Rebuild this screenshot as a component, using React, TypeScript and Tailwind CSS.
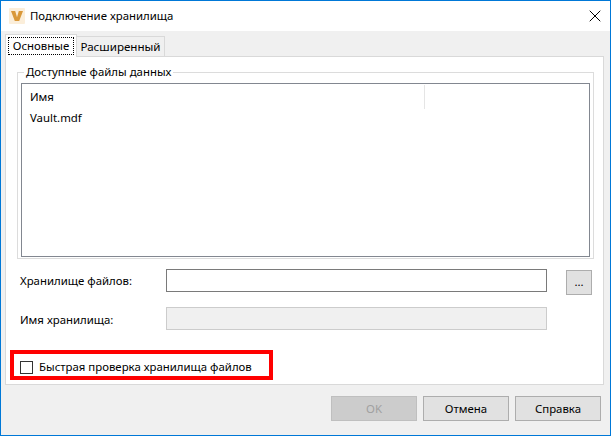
import { X } from 'lucide-react'

function DialogButton({ label, disabled }: { label: string; disabled?: boolean }) {
  return (
    <div
      className={
        'flex h-[25px] w-[86px] items-center justify-center border ' +
        (disabled ? 'border-[#bfbfbf] bg-[#cccccc] text-[#a0a0a0]' : 'border-[#adadad] bg-[#e1e1e1]')
      }
    >
      {label}
    </div>
  )
}

export default function App() {
  return (
    <div className="flex h-[436px] w-[611px] flex-col overflow-hidden border border-[#0078d7] bg-[#f0f0f0] font-['Noto_Sans','Open_Sans',sans-serif] text-[11.4px] leading-[16px] text-[#000000]">
      {/* Title bar */}
      <div className="flex h-[30px] shrink-0 items-center bg-white pl-[8px] pr-[5px]">
        <svg width="16" height="16" viewBox="0 0 16 16" className="shrink-0 blur-[0.4px]">
          <rect x="0" y="0" width="16" height="16" rx="1" fill="#fbeeda" />
          <path d="M2 3h4.2L8 9.2 9.8 3H14l-3.8 10H5.8z" fill="#d9983a" />
        </svg>
        <span className="ml-[5px] flex-1">Подключение хранилища</span>
        <X size={20} strokeWidth={1.2} className="text-black" />
      </div>

      <div className="flex flex-1 flex-col px-[4px] pt-[3px]">
        {/* Tabs */}
        <div className="relative z-10 flex h-[22px] items-end">
          <div className="relative h-[23px] w-[72px] translate-y-[1px] border border-b-0 border-[#d9d9d9] bg-white px-[2px] pt-[2px]">
            <div className="flex h-[18px] items-center justify-center border border-dotted border-black">Основные</div>
          </div>
          <div className="flex h-[20px] w-[88px] items-center justify-center border border-b-0 border-l-0 border-[#d9d9d9] text-[11.6px]">
            Расширенный
          </div>
        </div>

        {/* Panel */}
        <div className="relative flex h-[329px] w-[599px] flex-col border border-[#d9d9d9] bg-white pl-[11px]">
          <fieldset className="mt-[7px] h-[195px] w-[577px] border border-[#dcdcdc] px-[3px]">
            <legend className="ml-[3px] px-[2px] leading-[16px]">Доступные файлы данных</legend>
            <div className="mt-[3px] h-[174px] w-[569px] border border-[#828790] pt-[1px]">
              <div className="h-[24px] w-[403px] border-r border-[#e5e5e5] pl-[8px] pt-[4px]">Имя</div>
              <div className="mt-[1px] pl-[8px]">Vault.mdf</div>
            </div>
          </fieldset>

          <div className="mt-[10px] flex items-start">
            <div className="w-[149px] pl-[3px] pt-[4px]">Хранилище файлов:</div>
            <div className="h-[23px] w-[381px] border border-[#7a7a7a] bg-white" />
            <div className="ml-[19px] mt-[1px] flex h-[25px] w-[26px] items-center justify-center border border-[#adadad] bg-[#e1e1e1] pb-[2px]">
              ...
            </div>
          </div>
          <div className="mt-[12px] flex items-start">
            <div className="w-[149px] pl-[3px] pt-[5px]">Имя хранилища:</div>
            <div className="h-[23px] w-[381px] border border-[#cccccc] bg-[#f0f0f0]" />
          </div>

          <div className="mt-[29px] flex items-center pl-[3px]">
            <div className="h-[13px] w-[13px] border border-[#333333] bg-white" />
            <span className="ml-[6px]">Быстрая проверка хранилища файлов</span>
          </div>

          {/* red highlight */}
          <div className="absolute left-[4px] top-[293px] h-[30px] w-[263px] border-[4px] border-[#ff0000]" />
        </div>

        {/* Footer buttons */}
        <div className="mt-[11px] flex justify-end gap-[6px] pr-[5px]">
          <DialogButton label="OK" disabled />
          <DialogButton label="Отмена" />
          <DialogButton label="Справка" />
        </div>
      </div>
    </div>
  )
}
